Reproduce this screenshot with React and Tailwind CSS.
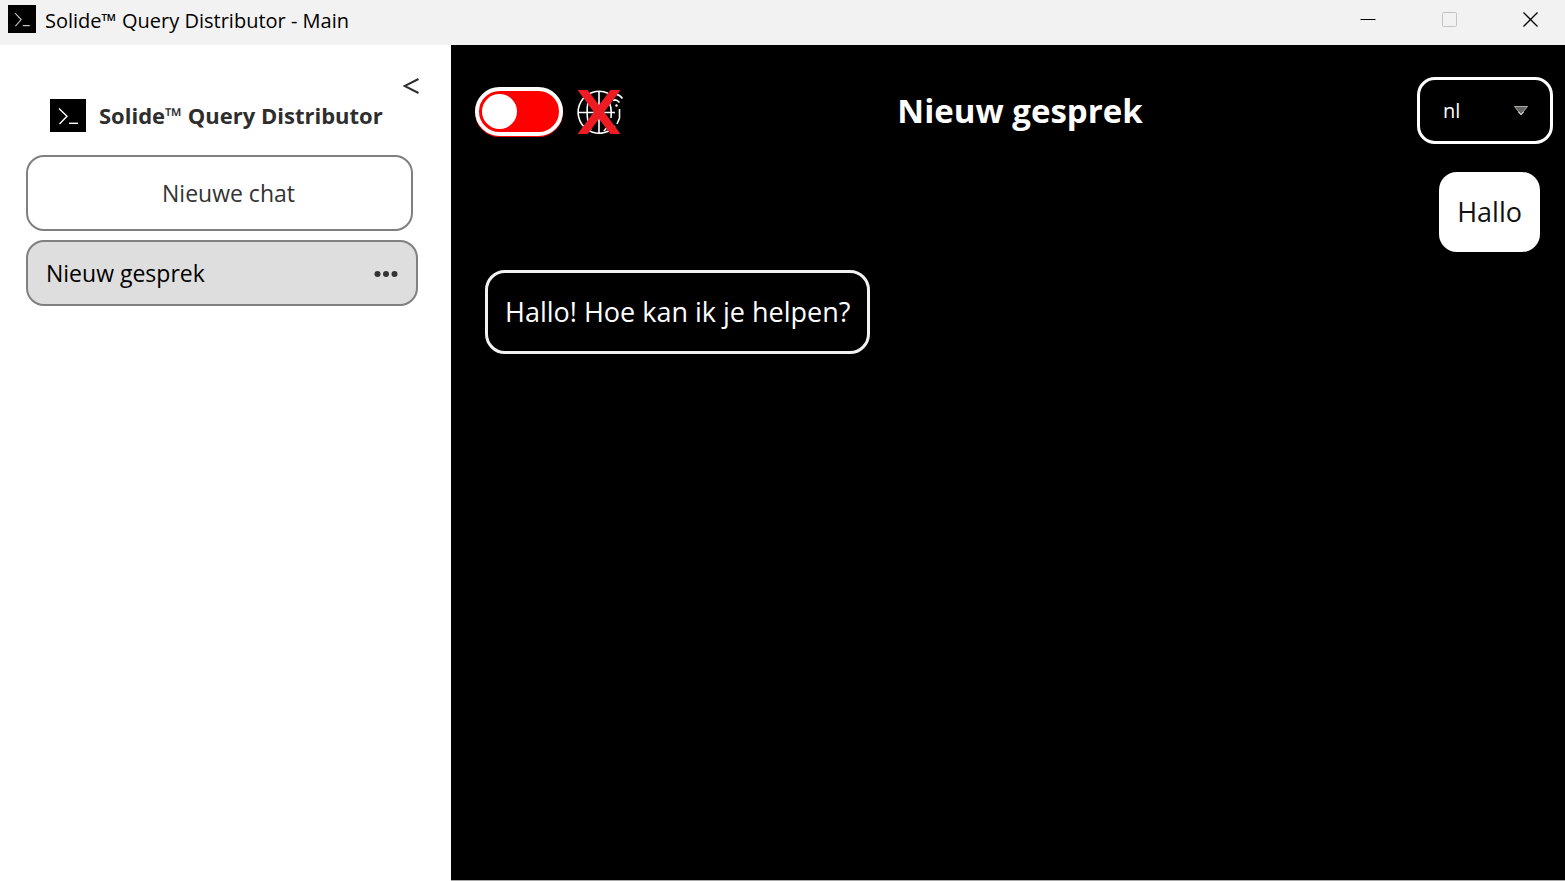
import React, { useState } from "react";

function PromptLogo({ className }) {
  return (
    <svg viewBox="0 0 36 33" preserveAspectRatio="none" className={className} aria-hidden="true">
      <rect width="36" height="33" fill="#000" />
      <path d="M9 9.5 L17 17.2 L9.5 25" fill="none" stroke="currentColor" strokeWidth="1.4" />
      <path d="M19 24.3 H28" fill="none" stroke="currentColor" strokeWidth="1.4" />
    </svg>
  );
}

function OfflineGlobe() {
  return (
    <svg viewBox="0 0 48 48" className="size-12 shrink-0" role="img" aria-label="Offline">
      <g fill="none" stroke="#fff" strokeWidth="1.6">
        <path d="M33 5.2 A21 21 0 1 0 40 38" />
        <path d="M24 3.500 V45.500" />
        <path d="M3 24.500 H40" />
        <path d="M15 8 C11 16 11 34 16 42" />
        <path d="M32 10 C36 16 37 22 36 30" />
        <path d="M35 36 L29 43" />
        <path d="M44.500 21 V30 L42 36" />
        <path d="M37 6.500 Q43 5 47.500 10.500" />
        <path d="M38 12.500 Q41 10.500 44.500 14.500" />
      </g>
      <circle cx="41.500" cy="17.500" r="1.200" fill="#fff" />
      <path d="M2.500 2 H12.500 L24 17 L35.500 2 H45.500 L29.200 24 L45.500 46 H35.500 L24 31 L12.500 46 H2.500 L18.800 24 Z" fill="#ed1c24" />
    </svg>
  );
}

function TitleBar() {
  return (
    <header className="flex h-[45px] shrink-0 items-start justify-between bg-[#f3f2f2] text-black">
      <div className="flex items-start gap-[9px] pl-2 pt-[5px]">
        <PromptLogo className="size-7 text-[#c8c8c8]" />
        <span className="text-[20px] leading-8">Solide™ Query Distributor - Main</span>
      </div>
      <div className="flex items-center">
        <button aria-label="Minimize" className="flex h-10 w-[81px] items-center justify-center">
          <svg viewBox="0 0 16 16" className="size-4">
            <path d="M0.500 7.500 H15.500" stroke="#000" />
          </svg>
        </button>
        <button aria-label="Maximize" disabled className="flex h-10 w-[81px] items-center justify-center">
          <svg viewBox="0 0 16 16" className="size-4">
            <rect x="1.500" y="0.500" width="14" height="14" rx="1" fill="none" stroke="#c4c4c4" />
          </svg>
        </button>
        <button aria-label="Close" className="flex h-10 w-[76px] items-center justify-start pl-[33px]">
          <svg viewBox="0 0 16 16" className="size-4">
            <path d="M1.500 0.500 L15.500 14.500 M15.500 0.500 L1.500 14.500" stroke="#000" strokeWidth="1.300" />
          </svg>
        </button>
      </div>
    </header>
  );
}

function Sidebar() {
  return (
    <aside className="flex w-[451px] shrink-0 flex-col bg-white pt-[25px]">
      <div className="flex justify-end pr-6">
        <button aria-label="Collapse sidebar" className="flex size-8 items-center justify-center">
          <svg viewBox="0 0 16 16" className="size-4">
            <path d="M15.500 1 L1.500 8 L15.500 15" fill="none" stroke="#2e2e2e" strokeWidth="2" />
          </svg>
        </button>
      </div>
      <div className="-mt-[5px] flex h-9 items-center gap-[13px] pl-[50px]">
        <PromptLogo className="h-[33px] w-9 text-white" />
        <h1 className="text-[22px] leading-8 font-bold text-[#2e2e2e]">Solide™ Query Distributor</h1>
      </div>
      <button className="mt-[22px] mr-[38px] ml-[26px] h-[76px] rounded-[18px] border-2 border-[#808080] pl-[18px] text-[23px] text-[#333]">
        Nieuwe chat
      </button>
      <div className="mt-[9px] mr-[33px] ml-[26px] flex h-[66px] items-center justify-between rounded-[18px] border-2 border-[#808080] bg-[#dedede] pr-[18px] pl-[18px]">
        <button className="text-[23px] leading-8 text-black">Nieuw gesprek</button>
        <button aria-label="Chat options">
          <svg viewBox="0 0 24 8" className="h-2 w-6">
            <g fill="#333">
              <circle cx="3.500" cy="5" r="3" />
              <circle cx="12" cy="5" r="3" />
              <circle cx="20.500" cy="5" r="3" />
            </g>
          </svg>
        </button>
      </div>
    </aside>
  );
}

function LanguageSelect() {
  return (
    <div className="relative">
      <select
        aria-label="Language"
        className="block h-[67px] w-[136px] appearance-none rounded-[18px] border-[3px] border-white bg-black pl-[23px] text-[20px] text-white"
      >
        <option>nl</option>
        <option>en</option>
      </select>
      <svg viewBox="0 0 14 10" className="pointer-events-none absolute top-[29px] right-[25px] h-[10px] w-[14px]">
        <path d="M0.500 0.500 H13.500 L7 8.500 Z" fill="#65615d" stroke="#aaa" />
        <path d="M4.500 6 L7 8.700 L9.500 6" fill="none" stroke="#fff" />
      </svg>
    </div>
  );
}

export default function App() {
  const [online, setOnline] = useState(false);
  return (
    <div className="flex min-h-screen flex-col font-['Open_Sans','Noto_Sans',sans-serif]">
      <TitleBar />
      <div className="flex flex-1">
        <Sidebar />
        <main className="flex flex-1 flex-col border-b border-[#a8a8a8] bg-black text-white">
          <div className="flex items-center pt-8 pr-3 pl-6">
            <div className="flex items-center gap-3 pt-[2px]">
              <input
                type="checkbox"
                aria-label="Online"
                checked={online}
                onChange={() => setOnline(!online)}
                className="h-[49px] w-[88px] shrink-0 appearance-none rounded-full border-4 border-white bg-[#ff0000] p-[3px] shadow-[0_1px_0_#ff0000] before:block before:size-[35px] before:rounded-full before:bg-white checked:bg-green-600 checked:before:ml-auto"
              />
              <OfflineGlobe />
            </div>
            <h2 className="flex-1 text-center text-[33px] leading-[48px] font-bold">Nieuw gesprek</h2>
            <LanguageSelect />
          </div>
          <div className="flex flex-col gap-[18px] pt-7 pr-[25px] pl-[34px]">
            <p className="self-end rounded-[18px] bg-white px-[18px] py-5 text-[27px] leading-10 text-[#111]">Hallo</p>
            <p className="self-start rounded-[20px] border-[3px] border-[#f2f2f2] px-[17px] py-[19px] text-[27px] leading-10">
              Hallo! Hoe kan ik je helpen?
            </p>
          </div>
        </main>
      </div>
    </div>
  );
}
